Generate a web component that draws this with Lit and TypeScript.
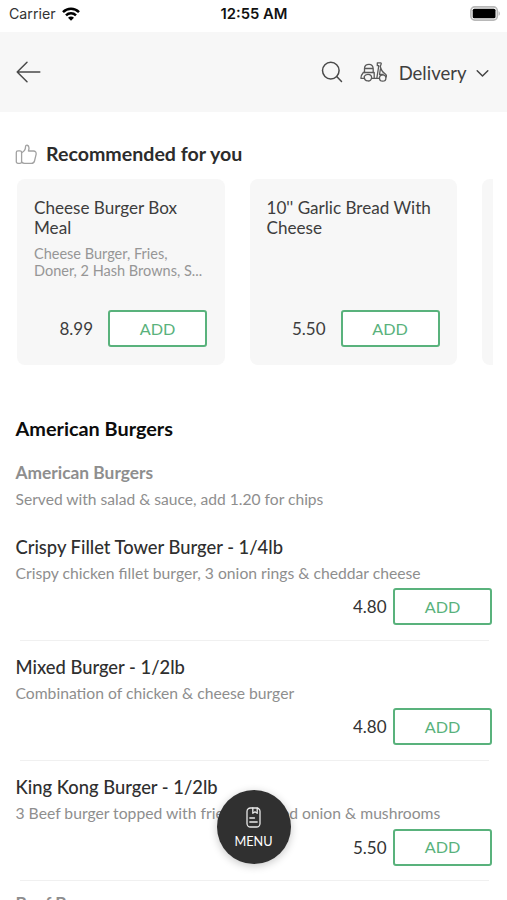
import { LitElement, html, css, nothing } from "lit";

interface Dish {
  name: string;
  detail: string;
  price: string;
}

const recommended: Dish[] = [
  { name: "Cheese Burger Box Meal", detail: "Cheese Burger, Fries,\nDoner, 2 Hash Browns, S...", price: "8.99" },
  { name: "10'' Garlic Bread With Cheese", detail: "", price: "5.50" },
];

const burgers: Dish[] = [
  { name: "Crispy Fillet Tower Burger - 1/4lb", detail: "Crispy chicken fillet burger, 3 onion rings & cheddar cheese", price: "4.80" },
  { name: "Mixed Burger - 1/2lb", detail: "Combination of chicken & cheese burger", price: "4.80" },
  { name: "King Kong Burger - 1/2lb", detail: "3 Beef burger topped with fried, battered onion & mushrooms", price: "5.50" },
];

class AddButton extends LitElement {
  static styles = css`
    :host { display: block; flex: none; }
    .add {
      display: block;
      box-sizing: border-box;
      width: 99px;
      height: 37px;
      padding: 0;
      border: 2px solid #59b27c;
      border-radius: 3px;
      background: #fff;
      color: #59b27c;
      font: 400 16.2px/32px Lato, sans-serif;
      text-align: center;
    }
  `;
  render() {
    return html`<button class="add">ADD</button>`;
  }
}
customElements.define("add-button", AddButton);

class StatusBar extends LitElement {
  static styles = css`
    :host {
      display: grid;
      grid-template-columns: 1fr auto 1fr;
      align-items: center;
      box-sizing: border-box;
      height: 32px;
      padding: 0 7px 5px 9px;
      font-family: Inter, sans-serif;
      color: #111;
      background: #fff;
    }
    .carrier { display: flex; align-items: center; gap: 6px; font-size: 14.2px; color: #333; }
    .time { margin-right: 1px; font-size: 14.8px; font-weight: 600; }
    .battery { justify-self: end; }
    svg { display: block; }
  `;
  render() {
    return html`
      <div class="carrier">
        <span>Carrier</span>
        <svg width="18" height="14" viewBox="0 0 18 14" fill="none" stroke="#000" stroke-width="2.5">
          <path d="M1 5.2C5.5.7 12.5.7 17 5.2" />
          <path d="M4 8.3C6.8 5.5 11.2 5.5 14 8.3" />
          <path d="M9 13.8L6 10.8C7.7 9.2 10.3 9.2 12 10.8Z" fill="#000" stroke="none" />
        </svg>
      </div>
      <div class="time">12:55 AM</div>
      <svg class="battery" width="30" height="15" viewBox="0 0 30 15">
        <rect x=".9" y=".9" width="26.4" height="13.2" rx="3.8" fill="#fff" stroke="#b8b8b8" stroke-width="1.6" />
        <rect x="2.7" y="2.7" width="22.8" height="9.6" rx="1.6" fill="#000" />
        <path d="M28.6 5.2c1.6.6 1.6 4 0 4.6z" fill="#b0b0b0" />
      </svg>
    `;
  }
}
customElements.define("status-bar", StatusBar);

class RecommendCard extends LitElement {
  static properties = { dish: { attribute: false } };
  declare dish: Dish;
  static styles = css`
    :host {
      display: flex;
      flex-direction: column;
      flex: none;
      box-sizing: border-box;
      width: 207.5px;
      height: 186px;
      padding: 19px 17.5px 18px 17px;
      border-radius: 8px;
      background: #f7f7f7;
    }
    .name { font-size: 17.1px; line-height: 20px; color: #3d3d3d; }
    .detail {
      margin-top: 6.5px;
      font-size: 14.5px;
      line-height: 17.5px;
      color: #969696;
      white-space: pre;
    }
    .buy {
      display: flex;
      justify-content: flex-end;
      align-items: center;
      gap: 15px;
      margin-top: auto;
      font-size: 17px;
      color: #3d3d3d;
    }
  `;
  render() {
    if (!this.dish) return nothing;
    return html`
      <div class="name">${this.dish.name}</div>
      ${this.dish.detail ? html`<div class="detail">${this.dish.detail}</div>` : nothing}
      <div class="buy"><span>${this.dish.price}</span><add-button></add-button></div>
    `;
  }
}
customElements.define("recommend-card", RecommendCard);

class MenuItem extends LitElement {
  static properties = { dish: { attribute: false } };
  declare dish: Dish;
  static styles = css`
    :host { display: block; box-sizing: border-box; height: 120.3px; padding: 15px 15px 0 15.5px; }
    .name { font-size: 18.35px; font-weight: 500; line-height: 24px; color: #2f2f2f; }
    .detail { margin-top: 4px; font-size: 15.7px; line-height: 20px; color: #8e8e8e; white-space: nowrap; }
    .buy {
      display: flex;
      justify-content: flex-end;
      align-items: center;
      gap: 6.5px;
      margin-top: 5.5px;
      font-size: 17px;
      color: #333;
    }
    .rule { height: 1px; margin: 14.5px 3px 0 4px; background: #f0f0f0; }
  `;
  render() {
    return html`
      <div class="name">${this.dish.name}</div>
      <div class="detail">${this.dish.detail}</div>
      <div class="buy"><span>${this.dish.price}</span><add-button></add-button></div>
      <div class="rule"></div>
    `;
  }
}
customElements.define("menu-item", MenuItem);

class AppRoot extends LitElement {
  static styles = css`
    :host {
      display: block;
      position: relative;
      width: 507px;
      height: 900px;
      overflow: hidden;
      background: #fff;
      font-family: Lato, sans-serif;
    }
    svg { display: block; flex: none; }
    .bar {
      display: flex;
      align-items: center;
      box-sizing: border-box;
      height: 80px;
      padding: 0 18.5px 0 16px;
      background: #f7f7f7;
    }
    .search { margin-left: auto; }
    .scooter { margin-left: 17px; }
    .mode { margin: 1px 9px 0 12px; font-size: 18.5px; line-height: 24px; color: #3f3f3f; }
    .chevron { margin-top: 3px; }
    .heading { display: flex; align-items: center; gap: 9px; height: 30px; padding: 27px 15px 0; }
    .heading h2 { margin: 0; font-size: 19.6px; line-height: 26px; font-weight: 700; color: #2c2c2c; }
    .carousel { display: flex; gap: 25px; overflow: hidden; margin: 10px 14px 0 17px; }
    .section { margin: 49px 0 0; padding: 0 15.5px; font-size: 19.85px; line-height: 28px; font-weight: 700; color: #0c0c0c; }
    .sub { margin: 19px 0 0; padding: 0 15.5px; font-size: 17.35px; line-height: 24px; font-weight: 700; color: #8e8e8e; }
    .note { margin: 3.5px 0 11px; padding: 0 15.5px; font-size: 15.6px; line-height: 20px; color: #8e8e8e; }
    .sub.next { margin-top: 12px; }
    .fab {
      position: absolute;
      left: 217px;
      top: 790px;
      display: flex;
      flex-direction: column;
      align-items: center;
      box-sizing: border-box;
      width: 74px;
      height: 74px;
      padding: 17px 1px 0 0;
      border: 0;
      border-radius: 50%;
      background: #303030;
      color: #fff;
      box-shadow: 0 2px 8px rgba(0, 0, 0, 0.22);
      font: 400 12.7px/16px Lato, sans-serif;
    }
    .fab span { margin-top: 5px; }
  `;
  render() {
    return html`
      <status-bar></status-bar>
      <header class="bar">
        <svg width="25" height="22" viewBox="0 0 25 22" fill="none" stroke="#4a4a4a" stroke-width="1.5" stroke-linecap="round" stroke-linejoin="round">
          <path d="M11 1.2L1.2 11L11 20.8M1.2 11H23.8" />
        </svg>
        <svg class="search" width="22" height="22" viewBox="0 0 22 22" fill="none" stroke="#4a4a4a" stroke-width="1.5" stroke-linecap="round">
          <circle cx="9.8" cy="9.6" r="8.3" /><path d="M15.7 15.5L20.5 20.4" />
        </svg>
        <svg class="scooter" width="27" height="20" viewBox="0 0 27 20" fill="none" stroke="#5a5a5a" stroke-width="1.3" stroke-linecap="round" stroke-linejoin="round">
          <path d="M4.5 10.5V6.5C4.500 3.500 6.500 2.300 9 2.300C11.600 2.300 13 3.800 13.200 6.500V10.500M5 6.500H13" />
          <path d="M3.300 10.500H14.200V16.300H19.300M3.300 10.500C2 12 .9 13.600.9 16.300H4M11.500 16.300H14.200" />
          <path d="M4.200 14.500C4.200 20.300 11.600 20.300 11.600 15.500C11.600 13.500 9.800 12.300 7.900 12.300C6 12.300 4.700 13.300 4.200 14.500" />
          <path d="M17.300.9H20.600C21.300.9 21.400 1.800 21 2.400L20.300 4.500C20.900 7.500 22.300 10 25 11.700C26.500 12.900 26.500 14.300 26 15M17.300.9V3.700H18.800L17.800 10L16.800 16.300M20.500 6.500L19.500 12.500H23" />
          <circle cx="22.700" cy="16" r="3.200" />
        </svg>
        <div class="mode">Delivery</div>
        <svg class="chevron" width="13" height="9" viewBox="0 0 13 9" fill="none" stroke="#444" stroke-width="1.5" stroke-linecap="round" stroke-linejoin="round">
          <path d="M1.2 1.8L6.5 7L11.8 1.8" />
        </svg>
      </header>

      <div class="heading">
        <svg width="22" height="21" viewBox="0 0 22 21" fill="none" stroke="#a2a2a2" stroke-width="1.3" stroke-linecap="round" stroke-linejoin="round">
          <rect x="1.3" y="6.8" width="5.3" height="12.5" rx="1.6" />
          <path d="M6.6 8.8C9 7.5 10.5 5.5 10.5 3C10.5.3 13.900.7 14 4C14 5.500 13.700 6 13.400 7H18.500C20.300 7 21.400 8.500 21.100 10.300L19.500 17C19.100 18.700 18.200 19.300 16.500 19.300H9.500C8 19.300 7.300 18.800 6.600 18" />
        </svg>
        <h2>Recommended for you</h2>
      </div>
      <div class="carousel">
        ${recommended.map((d) => html`<recommend-card .dish=${d}></recommend-card>`)}
        <recommend-card></recommend-card>
      </div>

      <h2 class="section">American Burgers</h2>
      <h3 class="sub">American Burgers</h3>
      <p class="note">Served with salad &amp; sauce, add 1.20 for chips</p>
      ${burgers.map((d) => html`<menu-item .dish=${d}></menu-item>`)}
      <h3 class="sub next">Beef Burgers</h3>

      <button class="fab">
        <svg width="15" height="21" viewBox="0 0 15 21" fill="none" stroke="#e8e8e8" stroke-width="1.3" stroke-linecap="round" stroke-linejoin="round">
          <rect x="1" y="1" width="13" height="19" rx="3.5" />
          <path d="M6.8 1V6.3L9 4.8L11.2 6.3V1M3.800 11H8.500M3.800 15H11.200" />
        </svg>
        <span>MENU</span>
      </button>
    `;
  }
}
customElements.define("app-root", AppRoot);
